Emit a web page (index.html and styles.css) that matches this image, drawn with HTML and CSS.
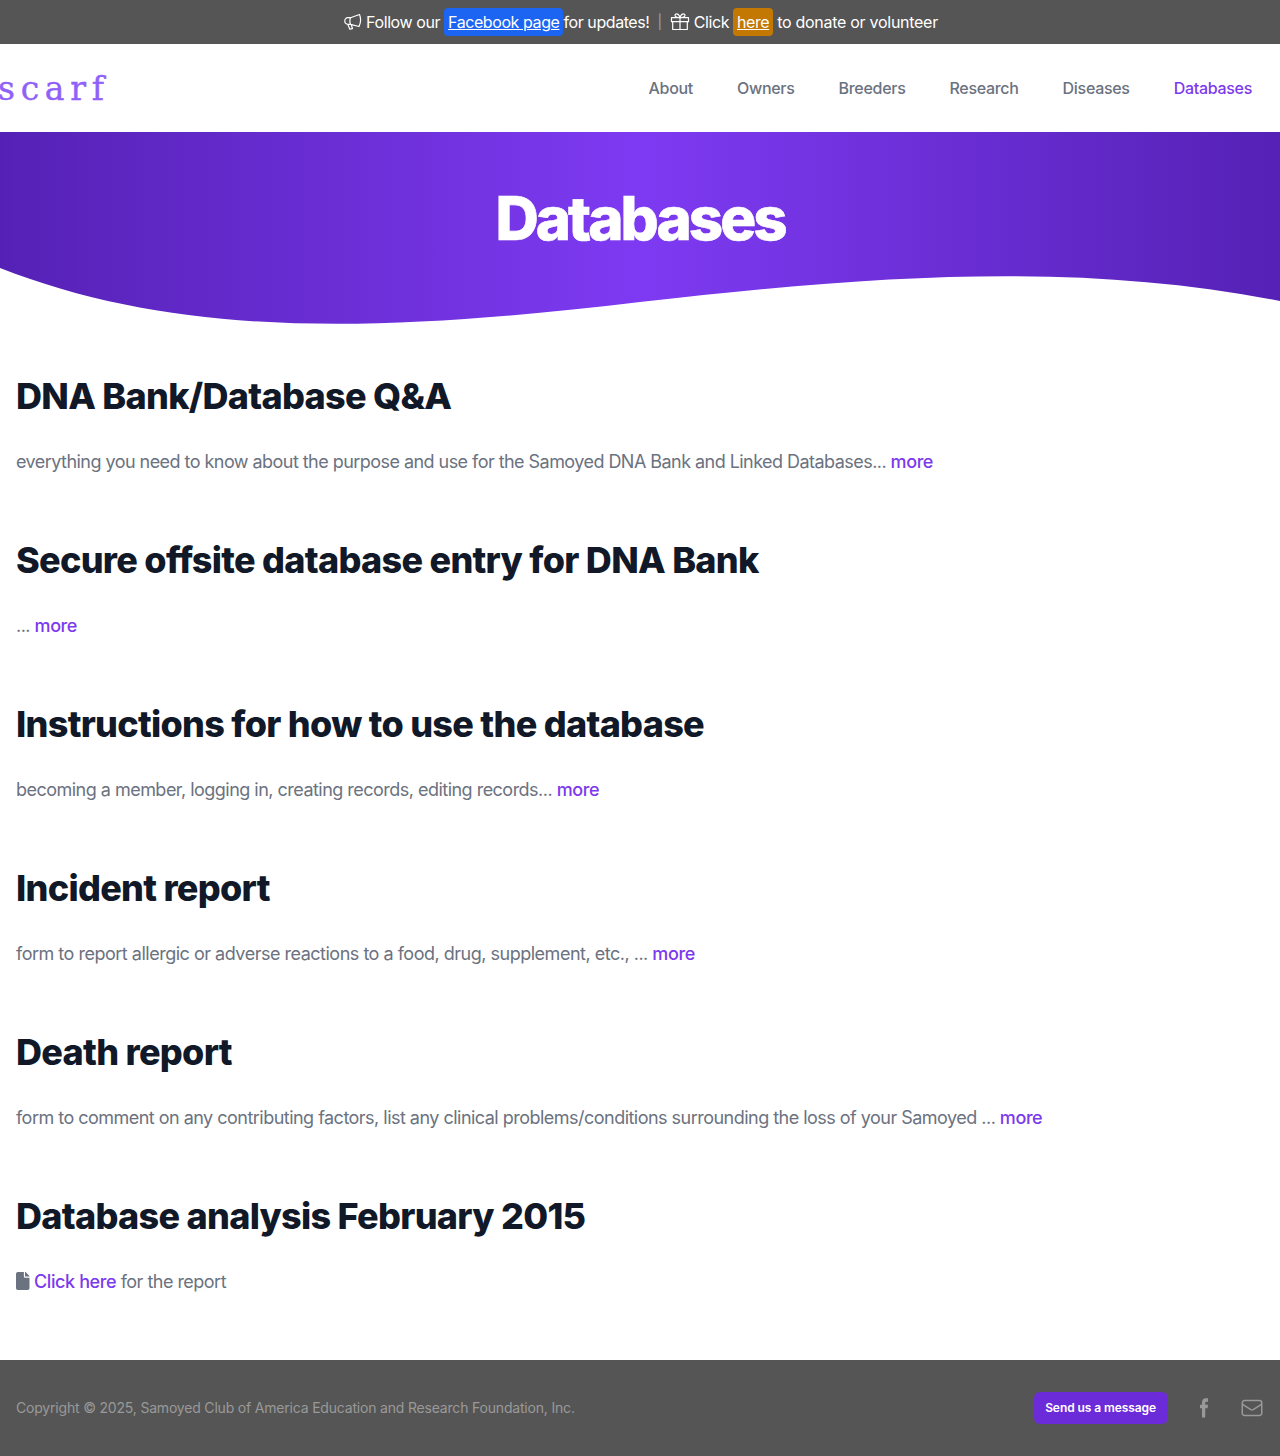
FILE: index.html
```html
<!DOCTYPE html>
<html lang="en">
<head>
<meta charset="utf-8">
<title>Databases</title>
<link rel="stylesheet" href="styles.css">
</head>
<body>
<div class="banner">
  <svg class="ico horn" viewBox="0 0 18 18"><path d="M15.500 1.500L6.500 4.700H3.800a3 3 0 0 0-3 3v.6a3 3 0 0 0 3 3h2.700L15 13.500M15.500 1.500C16.900 5 16.800 10 15 13.500M6.500 4.700C5.800 6.500 5.800 9.500 6.500 11.300M3.800 11.300L5.800 16.200 8.500 15.700 7.200 11.500"/></svg>
  <span>Follow our</span><a class="pill blue" href="#">Facebook page</a><span>for updates!</span><span class="sep">|</span>
  <svg class="ico gift" viewBox="0 0 20 20"><path d="M1.500 5.700h17v4h-17zM2.700 9.700v7.800h14.600V9.700M10 5.700v11.800M10 5.700C7 5.700 5 5 5 3.300S8.500.5 10 5.700C11.500.5 15 1.600 15 3.300S13 5.700 10 5.700"/></svg>
  <span>Click</span><a class="pill gold" href="#">here</a><span class="end">to donate or volunteer</span>
</div>
<header class="nav">
  <a class="logo" href="#">scarf</a>
  <nav><a href="#">About</a><a href="#">Owners</a><a href="#">Breeders</a><a href="#">Research</a><a href="#">Diseases</a><a class="on" href="#">Databases</a></nav>
</header>
<section class="hero">
  <h1>Databases</h1>
  <svg class="wave" viewBox="0 0 1280 60" preserveAspectRatio="none"><path d="M0 4C180 74.500 380 69 640 38C900 8 1090 0 1280 37V60H0Z"/></svg>
</section>
<main>
  <article><h2>DNA Bank/Database Q&amp;A</h2><p class="tight">everything you need to know about the purpose and use for the Samoyed DNA Bank and Linked Databases... <a href="#">more</a></p></article>
  <article><h2>Secure offsite database entry for DNA Bank</h2><p>... <a href="#">more</a></p></article>
  <article><h2>Instructions for how to use the database</h2><p>becoming a member, logging in, creating records, editing records... <a href="#">more</a></p></article>
  <article><h2>Incident report</h2><p class="loose">form to report allergic or adverse reactions to a food, drug, supplement, etc., ... <a href="#">more</a></p></article>
  <article><h2>Death report</h2><p>form to comment on any contributing factors, list any clinical problems/conditions surrounding the loss of your Samoyed ... <a href="#">more</a></p></article>
  <article><h2>Database analysis February 2015</h2><p><svg class="file" viewBox="0 0 384 512"><path d="M224 136V0H56C24 0 0 24 0 56v400c0 32 24 56 56 56h272c32 0 56-24 56-56V160H248c-13.200 0-24-10.800-24-24zm160-14.100v6.100H256V0h6.100c6.400 0 12.500 2.500 17 7l97.900 98c4.500 4.500 7 10.600 7 16.900z"/></svg> <a href="#">Click here</a> for the report</p></article>
</main>
<footer>
  <span class="copy">Copyright © 2025, Samoyed Club of America Education and Research Foundation, Inc.</span>
  <a class="btn" href="#">Send us a message</a>
  <svg class="fb" viewBox="0 0 10 20"><path d="M3 19.500V10.200H1V6.800H3V4.500C3 1.800 4.500.3 6.800.3H9V3.700H7.700C6.600 3.700 6.200 4.200 6.200 5v1.800H9L8.600 10.200H6.200V19.500z"/></svg>
  <svg class="mail" viewBox="0 0 24 24"><path d="M21.750 6.750v10.500a2.250 2.250 0 0 1-2.250 2.250h-15a2.250 2.250 0 0 1-2.250-2.250V6.750m19.500 0A2.250 2.250 0 0 0 19.500 4.500h-15a2.250 2.250 0 0 0-2.250 2.250m19.500 0v.243a2.250 2.250 0 0 1-1.070 1.916l-7.500 4.615a2.250 2.250 0 0 1-2.360 0L3.320 8.910a2.250 2.250 0 0 1-1.070-1.916V6.750"/></svg>
</footer>
</body>
</html>
```
FILE: styles.css
```css
*{box-sizing:border-box}
body{margin:0;background:#fff;font-family:Inter,sans-serif;font-size:16px;line-height:24px;color:#6b7280}
a{color:#7c3aed;text-decoration:none}
.banner{height:44px;background:#555;color:#fff;display:flex;align-items:center;justify-content:center;letter-spacing:-.42px;padding-left:2px}
.ico{fill:none;stroke:#fff;stroke-width:1.200;stroke-linejoin:round;stroke-linecap:round}
.horn{width:18px;height:18px;margin-right:4px}
.gift{width:20px;height:20px;margin-right:4px}
.pill{color:#fff;text-decoration:underline;padding:2px 4px;border-radius:4px;margin:0 4px}
.blue{background:#1c64f2;margin-right:0}
.gold{background:#c27803}
.end{letter-spacing:-.28px}
.sep{margin:0 8px;color:#9ca3af;font-size:14px}
.nav{height:88px;display:flex;justify-content:space-between;align-items:center;padding-right:28px}
.logo{font-family:"DejaVu Serif",serif;font-size:33px;line-height:40px;letter-spacing:5.700px;color:#9061f9;-webkit-text-stroke:.4px #9061f9;margin-left:-2px;padding-top:2px}
nav{display:flex;gap:44px;letter-spacing:-.3px}
nav a{font-weight:500;color:#6b7280}
nav .on{color:#7c3aed}
.hero{height:192px;background:linear-gradient(90deg,#5521b5,#7e3af2 50%,#5521b5);display:flex;flex-direction:column;justify-content:space-between}
h1{margin:56px 0 0;font-size:60px;line-height:60px;font-weight:800;letter-spacing:-3px;color:#fff;text-align:center;-webkit-text-stroke:.6px #fff}
.wave{display:block;width:100%;height:60px;fill:#fff}
main{padding:48px 16px 4px}
article{height:164px}
h2{margin:0;color:#111827;font-size:36px;line-height:48px;font-weight:800;letter-spacing:-.71px}
p{margin:28px 0 0;font-size:18px;line-height:28px;letter-spacing:-.52px}
.tight{letter-spacing:-.545px}
.loose{letter-spacing:-.49px}
p a{font-weight:500;letter-spacing:-.4px}
.file{width:13.500px;height:18px;fill:#6b7280;vertical-align:-2px}
footer{height:96px;background:#555;display:flex;align-items:center;padding:0 16px;color:#999;font-size:14px}
.copy{letter-spacing:-.19px}
.btn{margin-left:auto;background:#6c2bd9;color:#fff;font-size:12px;font-weight:600;letter-spacing:-.08px;border-radius:6px;height:32px;line-height:32px;padding:0 12px 0 11px}
.fb{width:10px;height:20px;fill:#999;margin-left:31px}
.mail{width:24px;height:24px;fill:none;stroke:#999;stroke-width:1.500;margin-left:31px}
```
